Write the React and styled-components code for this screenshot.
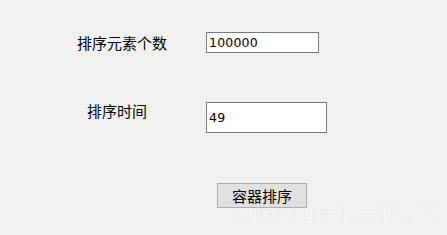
import React from "react";
import styled, { createGlobalStyle } from "styled-components";

const GlobalStyle = createGlobalStyle`
  html, body {
    margin: 0;
    padding: 0;
    background: #f0f0f0;
  }
`;

const Page = styled.div`
  position: relative;
  width: 447px;
  height: 235px;
  overflow: hidden;
  background: #f0f0f0;
  padding-top: 32px;
  box-sizing: border-box;
  font-family: "Noto Sans CJK SC", "Noto Sans", sans-serif;
  color: #000;
`;

const Row = styled.div`
  display: flex;
  align-items: flex-start;
  margin-top: ${(p) => p.$gap || 0}px;
`;

const Label = styled.div`
  font-size: 15px;
  line-height: 15px;
  width: 206px;
  padding-left: ${(p) => p.$left}px;
  margin-top: ${(p) => p.$top}px;
  box-sizing: border-box;
  flex-shrink: 0;
  white-space: nowrap;
`;

const Field = styled.div`
  display: flex;
  align-items: center;
  width: ${(p) => p.$w}px;
  height: ${(p) => p.$h}px;
  box-sizing: border-box;
  border: 1px solid #7a7a7a;
  background: #fff;
  padding-left: 2px;
  font-family: "DejaVu Sans", sans-serif;
  font-size: 12.5px;
  letter-spacing: 0.2px;
`;

const Button = styled.div`
  margin-left: 217px;
  width: 90px;
  height: 25px;
  box-sizing: border-box;
  border: 1px solid #adadad;
  background: #e1e1e1;
  display: flex;
  align-items: center;
  justify-content: center;
  font-size: 15px;
`;

const Watermark = styled.div`
  position: absolute;
  left: 235px;
  top: 206px;
  font-family: "Liberation Sans", Arial, sans-serif;
  font-size: 16px;
  color: #fbfbfb;
  text-shadow: 0 0 1px #cfcfcf;
  white-space: nowrap;
`;

export default function App() {
  return (
    <Page>
      <GlobalStyle />
      <Row>
        <Label $left={77} $top={3}>排序元素个数</Label>
        <Field $w={113} $h={21}>100000</Field>
      </Row>
      <Row $gap={49}>
        <Label $left={87} $top={1}>排序时间</Label>
        <Field $w={121} $h={31}>49</Field>
      </Row>
      <Row $gap={50}>
        <Button>容器排序</Button>
      </Row>
      <Watermark>https://blog.csdn.net/dive668</Watermark>
    </Page>
  );
}
